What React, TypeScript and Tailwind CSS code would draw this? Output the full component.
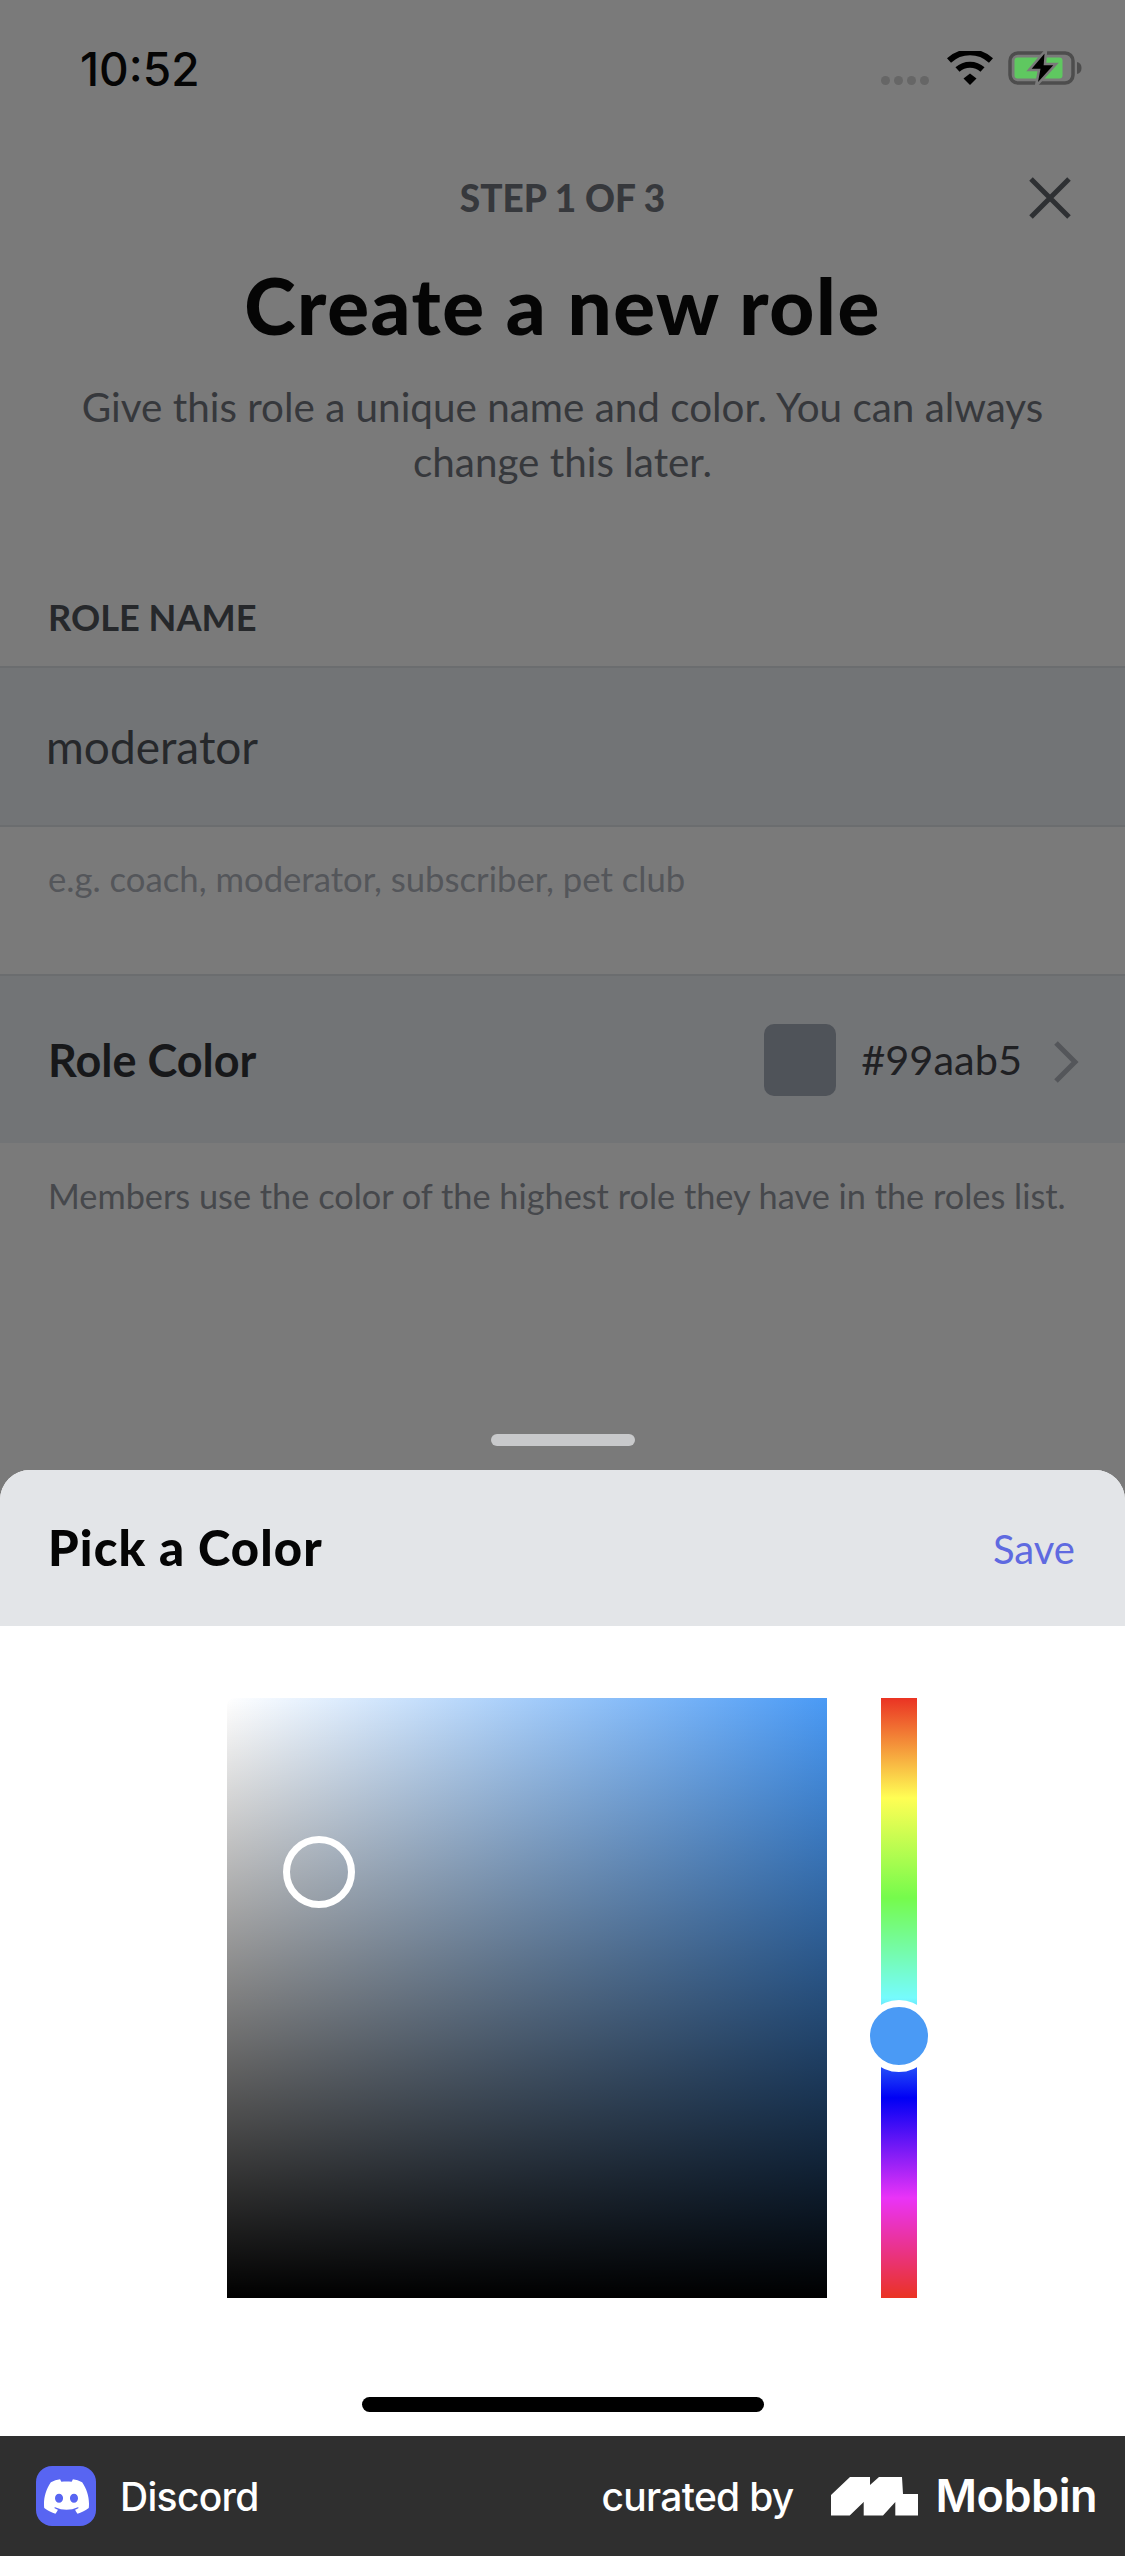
import { SiDiscord } from "react-icons/si";

const lato = "font-['Lato','Liberation_Sans',sans-serif]";

function StatusBar() {
  return (
    <div className="h-[138px] pl-[80px] pr-[43px] flex items-center justify-between">
      <span className="font-['Inter',sans-serif] text-[46px] leading-none font-medium text-[#050505] mt-[-1px]">10:52</span>
      <div className="flex items-center mt-[-2px]">
        <div className="flex gap-[4px] mt-[24px] mr-[18px]">
          <span className="w-[9px] h-[9px] rounded-full bg-[#666666]" />
          <span className="w-[9px] h-[9px] rounded-full bg-[#666666]" />
          <span className="w-[9px] h-[9px] rounded-full bg-[#666666]" />
          <span className="w-[9px] h-[9px] rounded-full bg-[#666666]" />
        </div>
        <svg width="46" height="34" viewBox="0 0 46 34" className="mr-[15px]">
          <path d="M23 22.500l-6.500 5L23 34l6.500-6.500z" fill="#000" />
          <path d="M10.500 18.500C17.500 12 28.500 12 35.500 18.500" fill="none" stroke="#000" strokeWidth="6" />
          <path d="M2 9.500C14 -1.500 32 -1.500 44 9.500" fill="none" stroke="#000" strokeWidth="6" />
        </svg>
        <svg width="74" height="36" viewBox="0 0 74 36">
          <rect x="2" y="3" width="63" height="30" rx="8" fill="none" stroke="#4d4d4d" strokeWidth="3.500" />
          <rect x="6.500" y="7.500" width="48" height="21" rx="3" fill="#5fc860" />
          <path d="M69 12c3 .5 4.500 3 4.500 6s-1.500 5.500-4.500 6z" fill="#4d4d4d" />
          <path d="M38 0L21 20H31L28 36L48 14H37z" fill="#000" stroke="#7a7a7a" strokeWidth="2.500" />
        </svg>
      </div>
    </div>
  );
}

export default function App() {
  return (
    <div className={`${lato} w-[1125px] h-[2556px] flex flex-col bg-[#7a7a7a] overflow-hidden`}>
      <StatusBar />

      <div className="relative flex flex-col items-center">
        <div className="mt-[42px] h-[36px] leading-[36px] text-[37px] font-black text-[#36383c]">STEP 1 OF 3</div>
        <svg width="42" height="42" viewBox="0 0 42 42" className="absolute right-[54px] top-[39px]">
          <path d="M2 2L40 40M40 2L2 40" stroke="#2e3033" strokeWidth="5" fill="none" />
        </svg>
        <h1 className="mt-[51px] h-[76px] leading-[76px] text-[78px] font-black tracking-[1.6px] text-[#050505]">Create a new role</h1>
        <p className="mt-[36px] w-[1000px] text-center text-[40.4px] leading-[55px] text-[#36383c]">
          Give this role a unique name and color. You can always change this later.
        </p>
      </div>

      <div className="mt-[110px] pl-[48px] h-[36px] leading-[36px] text-[36.2px] font-bold text-[#26282b]">ROLE NAME</div>

      <div className="mt-[31px] h-[161px] bg-[#727476] border-y-2 border-[#6b6d6f] flex items-center pl-[46px]">
        <span className="text-[46px] text-[#26282b]">moderator</span>
      </div>

      <div className="h-[147px] pt-[31px] pl-[48px] text-[34.7px] leading-[42px] text-[#54565a]">
        e.g. coach, moderator, subscriber, pet club
      </div>

      <div className="h-[169px] bg-[#727476] border-t-2 border-[#6b6d6f] flex items-center pl-[48px] pr-[46px]">
        <span className="mt-[2px] text-[45px] font-bold text-[#17181a]">Role Color</span>
        <div className="ml-auto w-[72px] h-[72px] rounded-[10px] bg-[#4f5359]" />
        <span className="ml-[25px] text-[41.5px] text-[#1f2023]">#99aab5</span>
        <svg width="26" height="44" viewBox="0 0 26 44" className="ml-[31px] mt-[4px]">
          <path d="M3 3L22 22L3 41" stroke="#54565a" strokeWidth="5" fill="none" />
        </svg>
      </div>

      <div className="pt-[32px] pl-[48px] text-[34.3px] leading-[42px] text-[#46484c] whitespace-nowrap">
        Members use the color of the highest role they have in the roles list.
      </div>

      <div className="mt-[217px] mx-auto w-[144px] h-[12px] rounded-full bg-[#c8c9cb]" />

      <div className="mt-[24px] flex-1 flex flex-col rounded-t-[30px] overflow-hidden bg-white">
        <div className="h-[156px] bg-[#e3e5e8] flex items-center justify-between pl-[48px] pr-[50px]">
          <span className="text-[49px] font-black tracking-[1.1px] text-[#050505]">Pick a Color</span>
          <span className="mt-[2px] text-[40px] text-[#5f6ae0]">Save</span>
        </div>

        <div className="mt-[72px] flex pl-[227px]">
          <div className="relative w-[600px] h-[600px] rounded-tl-[8px] bg-[linear-gradient(to_right,#ffffff,#4a9af5)] overflow-hidden">
            <div className="absolute inset-0 bg-[linear-gradient(to_bottom,rgba(0,0,0,0),#000000)]" />
            <div className="absolute left-[56px] top-[138px] w-[72px] h-[72px] rounded-full border-[7px] border-white" />
          </div>
          <div className="relative ml-[54px] w-[36px] h-[600px] bg-[linear-gradient(to_bottom,#ea3323,#fffe54_16.67%,#75fb4c_33.33%,#75fbfd_50%,#0000f5_66.67%,#ea33f7_83.33%,#ea3323)]">
            <div className="absolute left-[-18px] top-[302px] w-[72px] h-[72px] rounded-full border-[7px] border-white bg-[#4a9af5]" />
          </div>
        </div>

        <div className="mt-[99px] mx-auto w-[402px] h-[15px] rounded-full bg-black" />

        <div className="mt-auto h-[120px] bg-[#2f2f2f] flex items-center pl-[36px] pr-[28px] text-white font-['Inter',sans-serif]">
          <div className="w-[60px] h-[60px] rounded-[16px] bg-[#5865f2] flex items-center justify-center">
            <SiDiscord size={45} color="#ffffff" />
          </div>
          <span className="ml-[24px] mt-[2px] text-[39px] font-medium tracking-[-0.7px]">Discord</span>
          <span className="ml-auto mt-[2px] text-[39px] font-medium tracking-[-0.7px]">curated by</span>
          <svg width="87" height="39" viewBox="0 0 87 39" className="ml-[37px]">
            <path d="M0 18L19 0H39V8L48 0H71L72 17H87V38.500H64.300V25L52 38.500H32.700V25L18.700 38.500H0z" fill="#fff" />
          </svg>
          <span className="ml-[18px] text-[45px] font-semibold tracking-[-0.5px]">Mobbin</span>
        </div>
      </div>
    </div>
  );
}
